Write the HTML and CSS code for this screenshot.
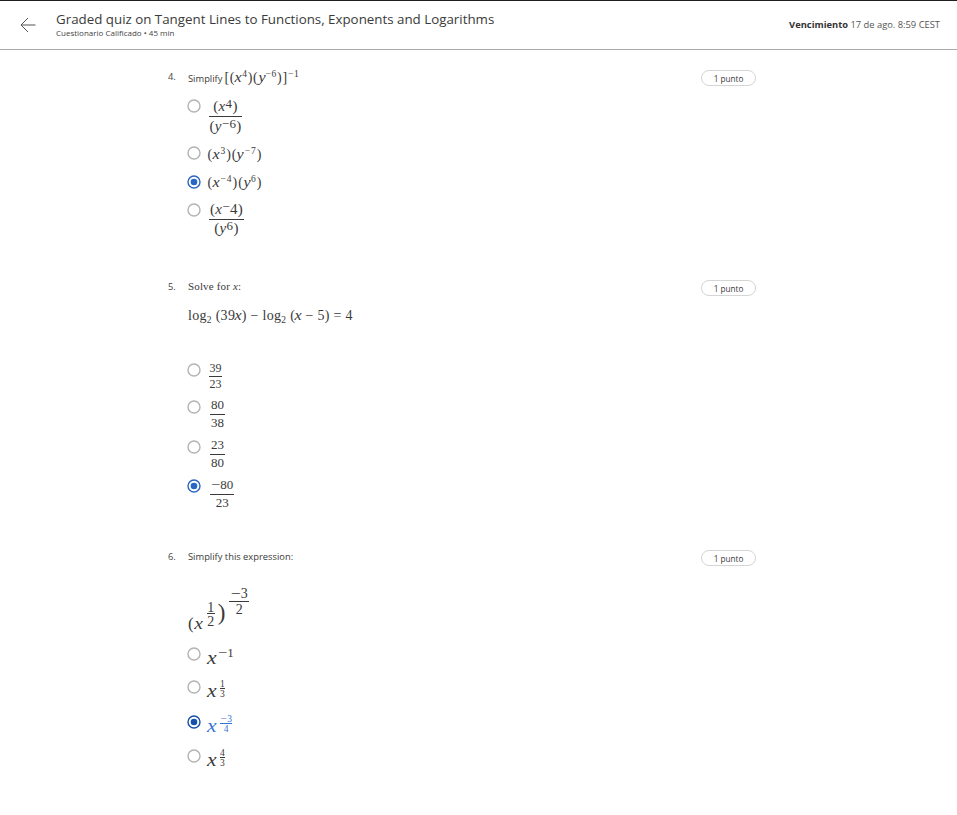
FILE: index.html
```
<!DOCTYPE html>
<html lang="es">
<head>
<meta charset="utf-8">
<title>Graded quiz</title>
<link rel="stylesheet" href="styles.css">
</head>
<body>
<header class="bar">
  <svg class="back" viewBox="0 0 16 16"><path d="M8 1 L1 8 L8 15 M1 8 H15.5"/></svg>
  <div class="heading">
    <h1>Graded quiz on Tangent Lines to Functions, Exponents and Logarithms</h1>
    <p>Cuestionario Calificado • 45 min</p>
  </div>
  <p class="due"><b>Vencimiento</b> 17 de ago. 8:59 CEST</p>
</header>
<main>
  <section class="question q4">
    <span class="num">4.</span>
    <div class="body">
      <div class="prompt"><span class="label">Simplify</span><span class="math tight">[(<i>x</i><sup>4</sup>)(<i>y</i><sup>−6</sup>)]<sup>−1</sup></span></div>
      <ul>
        <li><svg class="radio" viewBox="0 0 14 14"><circle cx="7" cy="7" r="6"/></svg><span class="frac lg"><span>(<i>x</i><sup>4</sup>)</span><span>(<i>y</i><sup>−6</sup>)</span></span></li>
        <li><svg class="radio" viewBox="0 0 14 14"><circle cx="7" cy="7" r="6"/></svg><span class="math">(<i>x</i><sup>3</sup>)(<i>y</i><sup>−7</sup>)</span></li>
        <li><svg class="radio on" viewBox="0 0 14 14"><circle cx="7" cy="7" r="6"/><circle class="dot" cx="7" cy="7" r="3.3"/></svg><span class="math raised">(<i>x</i><sup>−4</sup>)(<i>y</i><sup>6</sup>)</span></li>
        <li><svg class="radio" viewBox="0 0 14 14"><circle cx="7" cy="7" r="6"/></svg><span class="frac lg up"><span>(<i>x</i><span class="minus">−</span>4)</span><span>(<i>y</i><sup>6</sup>)</span></span></li>
      </ul>
    </div>
    <span class="points">1 punto</span>
  </section>
  <section class="question q5">
    <span class="num">5.</span>
    <div class="body">
      <div class="prompt serif">Solve for <i>x</i>:</div>
      <div class="math equation">log<sub>2</sub> (39<i>x</i>) − log<sub>2</sub> (<i>x</i> − 5) = 4</div>
      <ul>
        <li><svg class="radio" viewBox="0 0 14 14"><circle cx="7" cy="7" r="6"/></svg><span class="frac sm"><span>39</span><span>23</span></span></li>
        <li><svg class="radio" viewBox="0 0 14 14"><circle cx="7" cy="7" r="6"/></svg><span class="frac md"><span>80</span><span>38</span></span></li>
        <li><svg class="radio" viewBox="0 0 14 14"><circle cx="7" cy="7" r="6"/></svg><span class="frac md"><span>23</span><span>80</span></span></li>
        <li><svg class="radio on" viewBox="0 0 14 14"><circle cx="7" cy="7" r="6"/><circle class="dot" cx="7" cy="7" r="3.3"/></svg><span class="frac md down"><span><span class="neg">−</span>80</span><span>23</span></span></li>
      </ul>
    </div>
    <span class="points">1 punto</span>
  </section>
  <section class="question q6">
    <span class="num">6.</span>
    <div class="body">
      <div class="prompt"><span class="label wide">Simplify this expression:</span></div>
      <div class="power">
        <span class="base">(<i>x</i></span><span class="frac half"><span>1</span><span>2</span></span><span class="close">)</span><span class="frac outer"><span><span class="neg">−</span>3</span><span>2</span></span>
      </div>
      <ul>
        <li><svg class="radio" viewBox="0 0 14 14"><circle cx="7" cy="7" r="6"/></svg><i class="var">x</i><span class="exp"><span class="neg">−</span>1</span></li>
        <li><svg class="radio" viewBox="0 0 14 14"><circle cx="7" cy="7" r="6"/></svg><i class="var">x</i><span class="frac xs"><span>1</span><span>3</span></span></li>
        <li class="picked"><svg class="radio on" viewBox="0 0 14 14"><circle cx="7" cy="7" r="6"/><circle class="dot" cx="7" cy="7" r="3.3"/></svg><i class="var">x</i><span class="frac xs"><span><span class="neg">−</span>3</span><span>4</span></span></li>
        <li><svg class="radio" viewBox="0 0 14 14"><circle cx="7" cy="7" r="6"/></svg><i class="var">x</i><span class="frac xs"><span>4</span><span>3</span></span></li>
      </ul>
    </div>
    <span class="points">1 punto</span>
  </section>
</main>
</body>
</html>
```
FILE: styles.css
```
* { box-sizing: border-box; margin: 0; padding: 0; }
body { background: #fff; color: #3a3a3a; font-family: "Open Sans", sans-serif; height: 815px; overflow: hidden; }
.bar { display: flex; height: 50px; border-top: 1px solid #1f1f1f; border-bottom: 1px solid #aaa; padding: 0 17px 0 20px; }
.back { width: 16px; height: 16px; margin-top: 16px; fill: none; stroke: #555; stroke-width: 1; }
.heading { margin: 9px 0 0 20px; flex: 1; }
h1 { font-size: 13.33px; font-weight: 400; line-height: 18px; white-space: nowrap; }
.heading p { font-size: 8px; line-height: 10px; color: #444; }
.due { font-size: 9.35px; line-height: 13px; margin-top: 17px; color: #555; white-space: nowrap; }
.due b { color: #333; }

main { width: 588px; margin-left: 168px; }
.question { display: grid; grid-template-columns: 20px 1fr 55px; align-items: start; }
.q4 { height: 210px; padding-top: 20px; }
.q5 { height: 270px; padding-top: 20px; }
.q6 { height: 270px; padding-top: 20px; }
.num { font-size: 9.3px; line-height: 13px; color: #444; }
.points { height: 16px; border: 1px solid #d5d5d5; border-radius: 8px; font-size: 8.2px; line-height: 16px; text-align: center; }
.prompt { display: flex; height: 29px; line-height: 16px; font-size: 9px; }
.label { font-size: 9.35px; }
.q4 .label { line-height: 17px; }
.wide { line-height: 14px; }
.serif { font: 11px/13px "Liberation Serif", serif; white-space: pre; letter-spacing: .15px; }
.math, .power, .frac, .var, .exp { font-family: "Liberation Serif", serif; white-space: nowrap; }
.math { font-size: 14px; line-height: 17px; letter-spacing: 1px; }
.math i, .base i { display: inline-block; transform: scaleX(1.15); }
.neg { display: inline-block; transform: scaleX(1.25); margin: 0 1px; letter-spacing: 0; }
.tight { letter-spacing: .75px; margin-left: 2px; line-height: 16px; }
sup, sub { font-size: 9.5px; line-height: 0; }
sup { vertical-align: 5px; }
sub { vertical-align: -3px; }
.equation { letter-spacing: .3px; height: 55px; margin-top: -1px; line-height: 15px; }

ul { list-style: none; margin-left: -1px; }
li { display: flex; align-items: flex-start; height: 37px; }
.q4 li:nth-child(1) { height: 47px; }
.q4 li:nth-child(2) { height: 29px; }
.q4 li:nth-child(3) { height: 28px; }
.q5 li:nth-child(2) { height: 40px; }
.q5 li:nth-child(3) { height: 39px; }
.q6 li:nth-child(1) { height: 33px; }
.q6 li:nth-child(2) { height: 35px; }
.q6 li:nth-child(3) { height: 34px; }
.radio { flex: none; width: 14px; height: 14px; fill: none; stroke: #b3b3b3; stroke-width: 1.4; }
.radio.on { stroke: #2a66c4; }
.radio .dot { fill: #2a66c4; stroke: none; }
.picked .radio.on { stroke: #1550ad; }
.picked .radio .dot { fill: #1550ad; }
.picked { color: #3973d4; }
li .math { margin: 0 0 0 6.5px; }
li .raised { margin-top: -1px; }

.frac { display: inline-flex; flex-direction: column; text-align: center; }
.frac > span { display: block; }
.frac > span:first-child { border-bottom: 1px solid currentColor; }
.lg { margin-left: 8px; font-size: 15px; width: 33px; letter-spacing: .3px; }
.lg > span:first-child { line-height: 14px; height: 18px; }
.lg > span:last-child { line-height: 18px; }
.lg sup { font-size: 13px; vertical-align: 3px; }
.minus { font-size: 13px; vertical-align: 3px; line-height: 0; }
.up { width: 35px; }
.up > span:first-child { height: 17px; line-height: 13px; }
.up > span:last-child { line-height: 17px; }
.md { margin-left: 9px; font-size: 13px; }
.md > span:first-child { line-height: 10px; height: 15px; padding: 0 1px; }
.md > span:last-child { line-height: 16px; }
.down > span:first-child { height: 16px; line-height: 11px; }
.sm { margin-left: 8px; font-size: 12px; }
.sm > span:first-child { line-height: 11px; height: 14px; padding: 0 .5px; }
.sm > span:last-child { line-height: 14px; }

.power { display: flex; height: 68px; font-size: 15px; }
.base { margin-top: 37px; line-height: 16px; letter-spacing: 1.7px; font-size: 17px; }
.half { margin: 23px 0 0 2px; font-size: 14px; width: 8px; height: 30px; }
.half > span:first-child { line-height: 11px; height: 12px; }
.half > span:last-child { line-height: 16px; }
.close { font-size: 23px; line-height: 24px; margin: 22px 0 0 3px; }
.outer { margin: 8px 0 0 4px; font-size: 14px; width: 20px; }
.outer > span:first-child { line-height: 14px; height: 15px; }
.outer > span:last-child { line-height: 15px; }
.var { font-size: 18px; line-height: 24px; margin: -1px 1px 0 7px; width: 9px; transform: scaleX(1.2); }
.exp { font-size: 13px; line-height: 12px; }
.xs { margin: 0 0 0 2px; font-size: 9.5px; }
.xs > span:first-child { line-height: 8px; height: 9px; }
.xs > span:last-child { line-height: 10px; }
```
